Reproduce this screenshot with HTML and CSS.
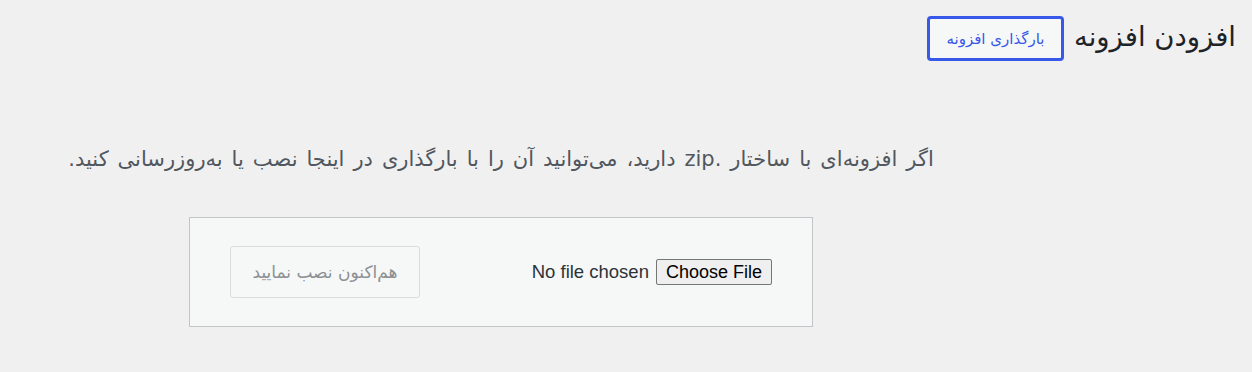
FILE: index.html
```html
<!DOCTYPE html>
<html lang="fa" dir="rtl">
<head>
<meta charset="utf-8">
<title>افزودن افزونه</title>
<link rel="stylesheet" href="styles.css">
</head>
<body>
<div class="wrap">
  <header class="page-head">
    <h1 class="page-title">افزودن افزونه</h1>
    <button class="upload-btn" type="button">بارگذاری افزونه</button>
  </header>
  <section class="upload">
    <p class="install-help">اگر افزونه‌ای با ساختار .zip دارید، می‌توانید آن را با بارگذاری در اینجا نصب یا به‌روزرسانی کنید.</p>
    <form class="upload-form">
      <div class="file-field">
        <span class="file-btn">Choose File</span>
        <span class="file-name">No file chosen</span>
      </div>
      <button class="install-btn" type="button" disabled>هم‌اکنون نصب نمایید</button>
    </form>
  </section>
</div>
</body>
</html>
```

FILE: styles.css
```css
html, body {
  margin: 0;
  padding: 0;
}
body {
  background: #f0f0f1;
  font-family: "DejaVu Sans", "Noto Sans", sans-serif;
  color: #3c434a;
  width: 1252px;
  height: 372px;
  overflow: hidden;
}
.wrap {
  direction: rtl;
}
.page-head {
  display: flex;
  align-items: center;
  gap: 10px;
  padding: 16px 16px 0 0;
}
.page-title {
  margin: 0;
  font-size: 27.5px;
  font-weight: 400;
  color: #1d2327;
  line-height: 45px;
  position: relative;
  top: -2px;
}
.upload-btn {
  height: 45px;
  width: 137px;
  border: 3px solid #3858e9;
  border-radius: 4px;
  background: #f6f7f7;
  color: #3858e9;
  font-family: inherit;
  font-size: 15px;
  padding: 0 8px;
}
.upload {
  width: 1002px;
  margin-right: auto;
  display: flex;
  flex-direction: column;
  align-items: center;
}
.install-help {
  margin: 84px 0 0;
  font-size: 21px;
  word-spacing: 2.3px;
  line-height: 28px;
  color: #50575e;
}
.upload-form {
  margin-top: 44px;
  width: 624px;
  height: 110px;
  box-sizing: border-box;
  background: #f6f7f7;
  border: 1px solid #c3c4c7;
  display: flex;
  justify-content: space-between;
  align-items: center;
  padding: 0 40px 1px;
}
.file-field {
  direction: ltr;
  display: flex;
  flex-direction: row-reverse;
  align-items: center;
  gap: 7px;
  font-family: "Liberation Sans", Arial, sans-serif;
  font-size: 18px;
}
.file-name {
  color: #2c3338;
  font-size: 18.5px;
}
.file-btn {
  display: inline-block;
  height: 26px;
  line-height: 24px;
  box-sizing: border-box;
  padding: 0 9px;
  border: 1px solid #767676;
  border-radius: 2px;
  background: #efefef;
  color: #000;
}
.install-btn {
  width: 190px;
  height: 52px;
  border: 1px solid #dcdcde;
  border-radius: 3px;
  background: #f6f7f7;
  color: #8c8f94;
  font-family: inherit;
  font-size: 17px;
  padding: 0;
}
```
